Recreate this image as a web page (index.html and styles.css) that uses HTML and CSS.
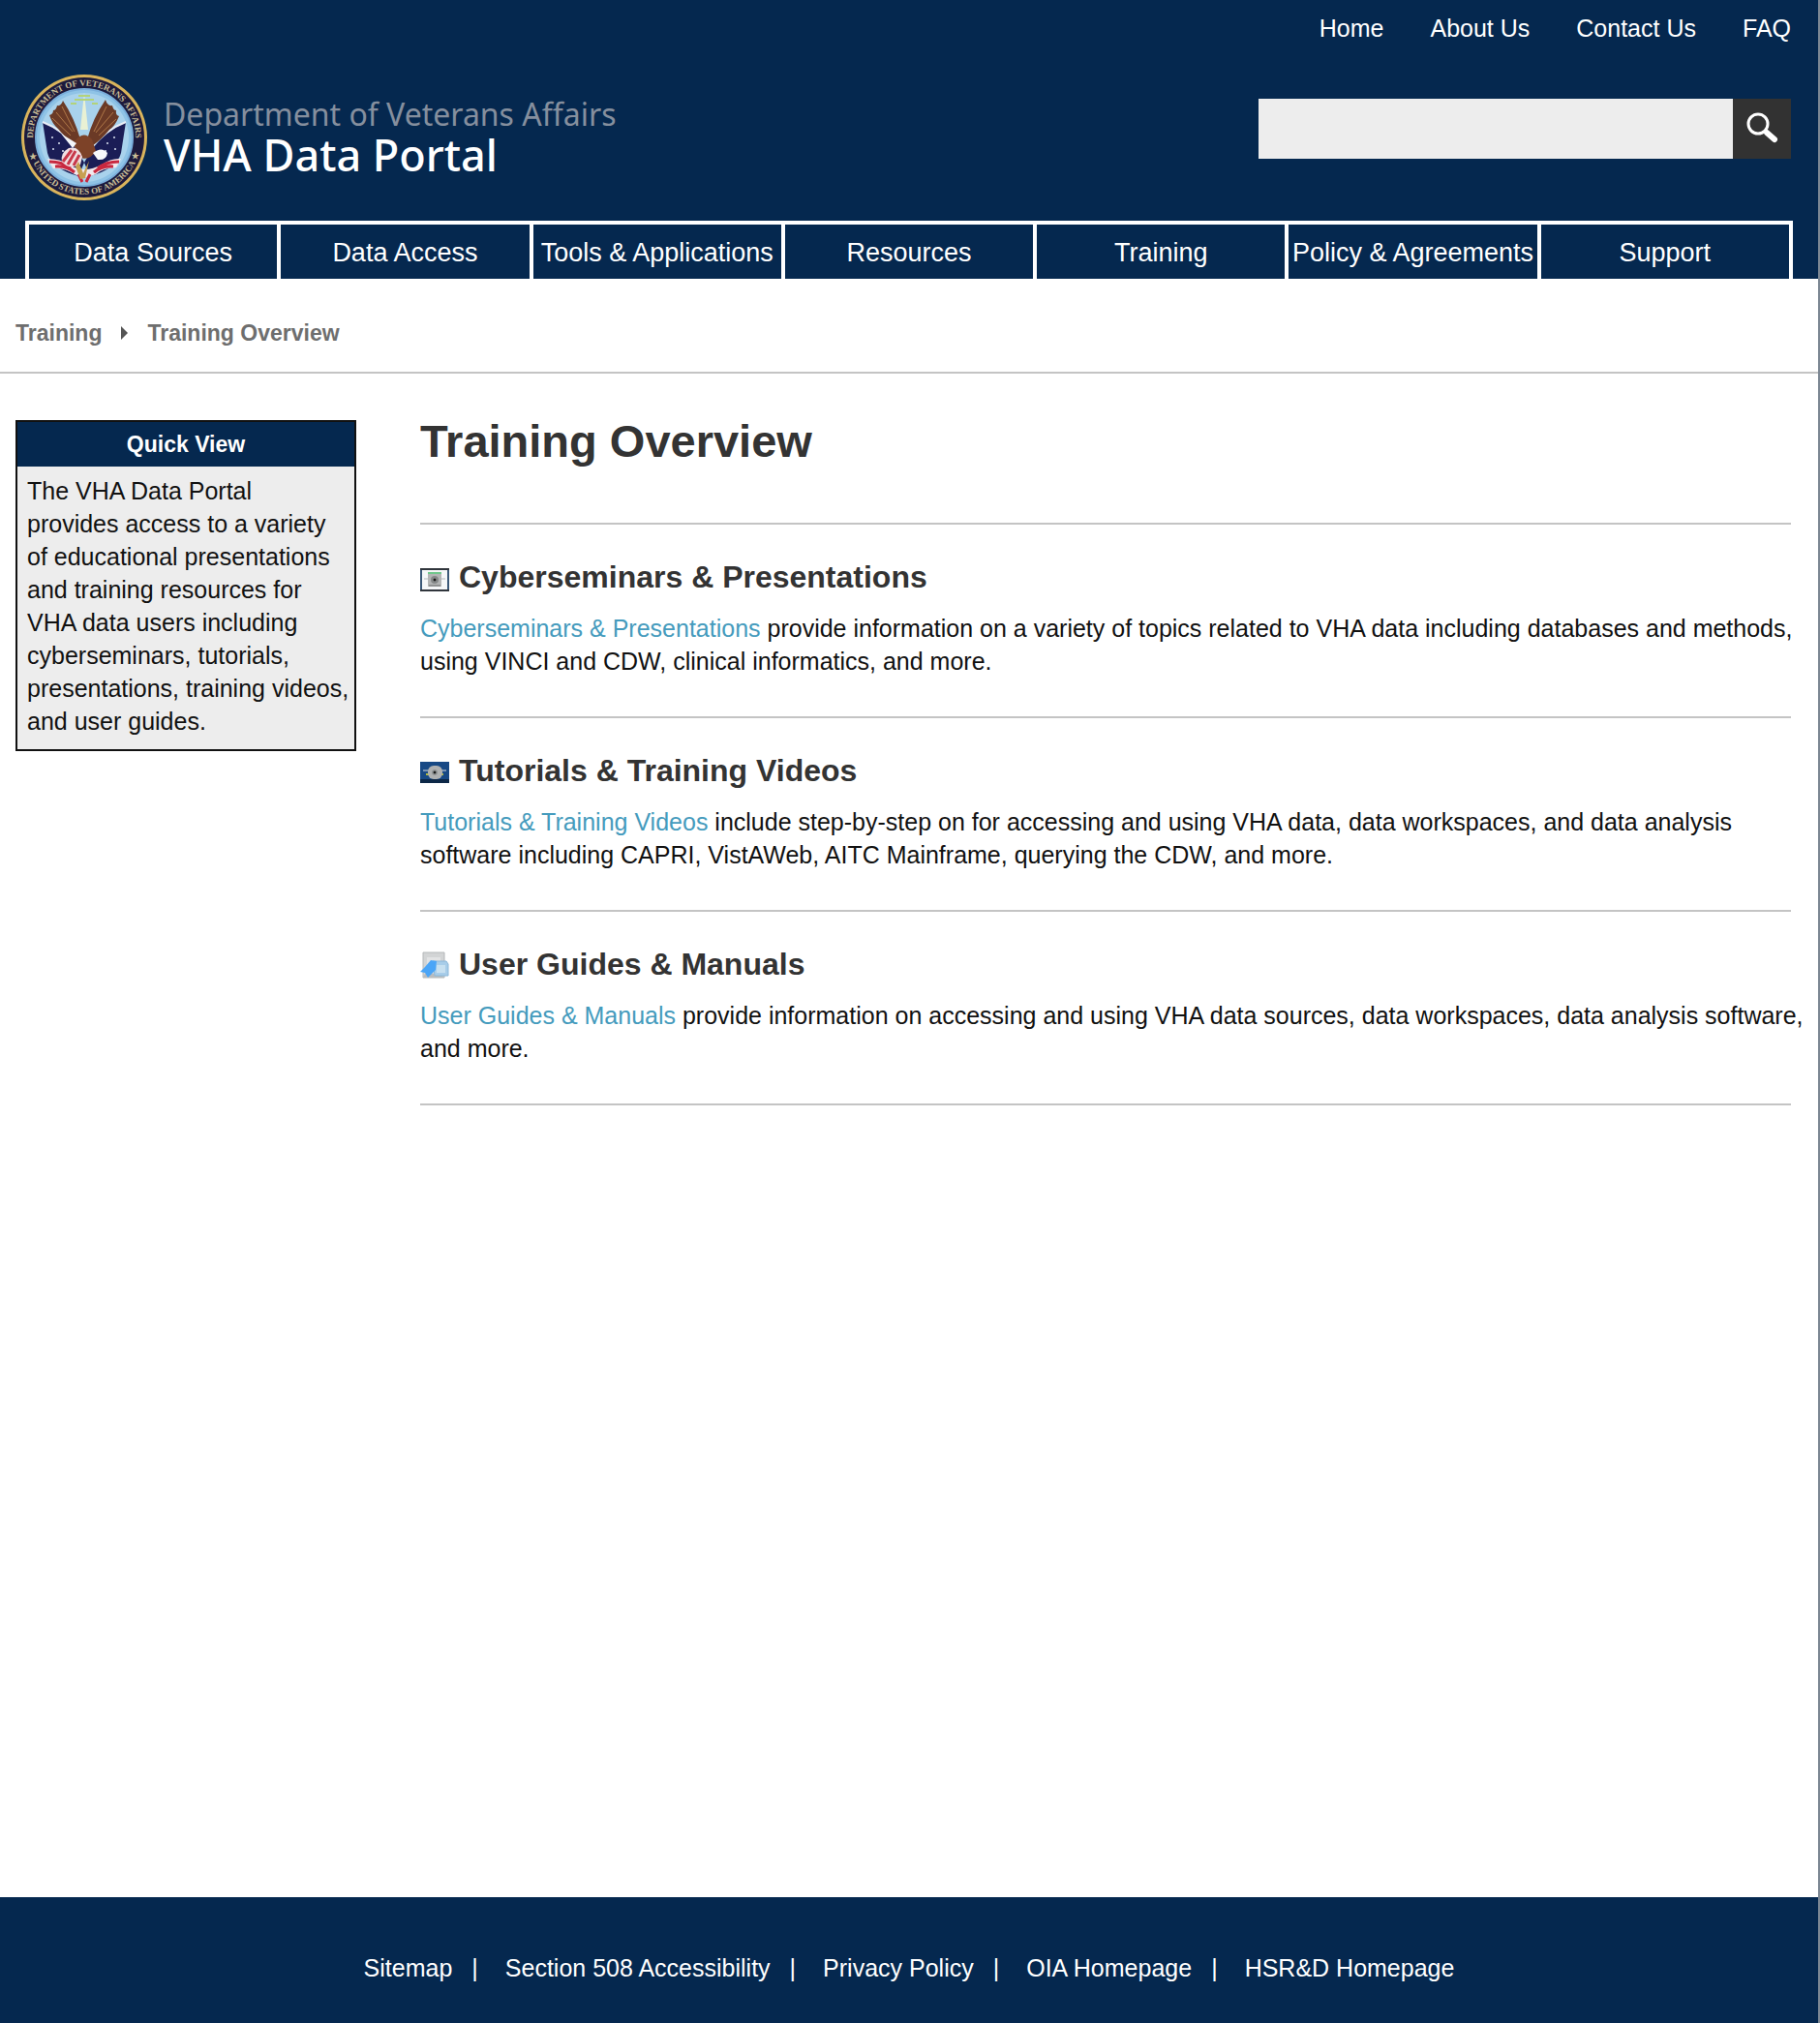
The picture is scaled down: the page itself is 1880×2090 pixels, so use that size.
FILE: index.html
```html
<!DOCTYPE html>
<html lang="en">
<head>
<meta charset="utf-8">
<title>Training Overview - VHA Data Portal</title>
<link rel="stylesheet" href="styles.css">
</head>
<body>
<header class="site-header">
  <nav class="utility-nav" aria-label="Utility">
    <a href="#">Home</a>
    <a href="#">About Us</a>
    <a href="#">Contact Us</a>
    <a href="#">FAQ</a>
  </nav>
  <div class="masthead">
    <a class="brand" href="#">
      <svg class="seal" viewBox="0 0 132 132" role="img" aria-label="Department of Veterans Affairs seal">
        <defs>
          <path id="arc-top" d="M18 88 A53 53 0 1 1 114 88"/>
          <path id="arc-bottom" d="M8 55 A59 59 0 1 0 124 55"/>
          <clipPath id="field"><circle cx="66" cy="66" r="50"/></clipPath>
        </defs>
        <circle cx="66" cy="66" r="65" fill="#d9b45c"/>
        <circle cx="66" cy="66" r="62" fill="#1d1a3c"/>
        <circle cx="66" cy="66" r="50" fill="#8fc3e6"/>
        <g clip-path="url(#field)">
          <circle cx="66" cy="66" r="46" fill="#a9d2ec"/>
          <path d="M66 20 L70 58 H62 Z" fill="#e9f1d4"/>
          <path d="M56 27h20M52 31h6M74 31h6M60 23h12" stroke="#b3d37a" stroke-width="2"/>
          <path d="M23 50 Q42 58 58 78 L66 92 L60 106 Q32 98 28 82 Z" fill="#1b1d56"/>
          <path d="M109 50 Q90 58 74 78 L66 92 L72 106 Q100 98 104 82 Z" fill="#1b1d56"/>
          <path d="M23 50 Q44 58 60 78M109 50 Q88 58 72 78" stroke="#e9eef6" stroke-width="2" fill="none"/>
          <g fill="#dfe6f4"><circle cx="33" cy="66" r="1"/><circle cx="40" cy="72" r="1"/><circle cx="34" cy="78" r="1"/><circle cx="44" cy="80" r="1"/><circle cx="97" cy="66" r="1"/><circle cx="90" cy="72" r="1"/><circle cx="98" cy="78" r="1"/><circle cx="88" cy="80" r="1"/></g>
          <path d="M28 88 Q42 88 50 94 Q66 104 84 94 Q94 87 104 88 L99 97 Q84 98 78 104 Q66 110 56 104 Q46 97 34 98 Z" fill="#f2e8ec"/>
          <path d="M30 91 Q44 91 52 98M36 96 Q48 95 56 102M102 91 Q88 91 80 98M96 96 Q84 95 76 102M60 104l4 8M72 104l-4 8" stroke="#c8283f" stroke-width="3" fill="none"/>
          <path d="M62 68 Q56 46 44 28 Q42 34 38 33 Q37 38 34 38 Q34 42 30 43 Q33 52 39 57 Q46 66 57 74 Z" fill="#6b3a26"/>
          <path d="M69 68 Q75 46 88 27 Q90 34 95 33 Q96 38 99 38 Q98 43 102 44 Q98 54 92 58 Q84 68 74 75 Z" fill="#6b3a26"/>
          <path d="M56 70 Q65 58 74 68 L78 80 Q72 90 62 87 Q55 80 56 70Z" fill="#7d4228"/>
          <path d="M43 34l13 26M37 40l17 20M33 46l19 18M89 34l-13 26M96 40l-18 21M99 47l-18 17" stroke="#b07848" stroke-width="1" fill="none"/>
          <path d="M42 62 L58 72 L54 77 Z" fill="#f4f6fa"/>
          <path d="M75 82 Q84 75 90 82 Q89 90 80 89 Z" fill="#f7f8fa"/>
          <path d="M50 77 Q60 74 64 86 L62 94 Q50 100 43 91 Q41 82 50 77Z" fill="#efdfe2"/>
          <path d="M44 91l9-12M49 94l8-14M55 95l6-11" stroke="#c8384a" stroke-width="3"/>
          <path d="M60 91l5 12 6-13-4 18-5 1-5-13Z" fill="#c7a051"/>
        </g>
        <circle cx="66" cy="66" r="50" fill="none" stroke="#7aaedb" stroke-width="2"/>
        <text class="seal-text"><textPath href="#arc-top" startOffset="50%" text-anchor="middle">DEPARTMENT OF VETERANS AFFAIRS</textPath></text>
        <text class="seal-text"><textPath href="#arc-bottom" startOffset="50%" text-anchor="middle">★ UNITED STATES OF AMERICA ★</textPath></text>
      </svg>
      <span class="brand-text">
        <span class="brand-dept">Department of Veterans Affairs</span>
        <span class="brand-name">VHA Data Portal</span>
      </span>
    </a>
    <form class="search" role="search">
      <input type="search" class="search-input" aria-label="Search">
      <button type="button" class="search-button" aria-label="Search">
        <svg width="34" height="34" viewBox="0 0 34 34" fill="none" stroke="#fff">
          <circle cx="13" cy="12" r="10" stroke-width="3"/>
          <path d="M22 21 L30 28" stroke-width="6" stroke-linecap="round"/>
        </svg>
      </button>
    </form>
  </div>
  <nav class="main-nav" aria-label="Main">
    <a href="#">Data Sources</a>
    <a href="#">Data Access</a>
    <a href="#">Tools &amp; Applications</a>
    <a href="#">Resources</a>
    <a href="#">Training</a>
    <a href="#">Policy &amp; Agreements</a>
    <a href="#">Support</a>
  </nav>
</header>

<nav class="breadcrumb" aria-label="Breadcrumb">
  <a href="#">Training</a>
  <svg width="7" height="14" viewBox="0 0 7 14"><path d="M0 0 L7 7 L0 14 Z" fill="#555"/></svg>
  <a href="#">Training Overview</a>
</nav>

<div class="page">
  <aside class="quick-view">
    <h2 class="quick-title">Quick View</h2>
    <p class="quick-text">The VHA Data Portal<br>provides access to a variety<br>of educational presentations<br>and training resources for<br>VHA data users including<br>cyberseminars, tutorials,<br>presentations, training videos,<br>and user guides.</p>
  </aside>
  <main class="content">
    <h1 class="title">Training Overview</h1>
    <section class="topic">
      <h2 class="topic-title">
        <svg class="topic-icon" width="30" height="30" viewBox="0 0 30 30">
          <rect y="4" width="30" height="24" fill="#3a5877"/>
          <path d="M0 4h30v2H0zM0 26h30v2H0z" fill="#30353c"/>
          <rect x="2" y="6" width="26" height="20" fill="#f5f7f8"/>
          <path d="M4 15h22" stroke="#d5d8da" stroke-width="2"/>
          <rect x="8" y="8" width="14" height="15" fill="#b3b5b5"/>
          <path d="M8 9h14" stroke="#71c78c" stroke-width="2"/>
          <path d="M9 22h12" stroke="#8f9191" stroke-width="2"/>
          <circle cx="15" cy="16" r="4" fill="#858888"/>
          <circle cx="15" cy="16" r="1" fill="#111" stroke="#111"/>
        </svg>
        Cyberseminars &amp; Presentations
      </h2>
      <p><a href="#">Cyberseminars &amp; Presentations</a> provide information on a variety of topics related to VHA data including databases and methods, using VINCI and CDW, clinical informatics, and more.</p>
    </section>
    <section class="topic">
      <h2 class="topic-title">
        <svg class="topic-icon" width="30" height="30" viewBox="0 0 30 30">
          <rect y="4" width="30" height="22" fill="#174985"/>
          <rect y="22" width="30" height="4" fill="#0c2747"/>
          <path d="M3 13h24" stroke="#7893b3" stroke-width="2"/>
          <path d="M6 17h18" stroke="#b5bd3c" stroke-width="2"/>
          <rect x="8" y="8" width="15" height="14" rx="6" fill="#afb1b2"/>
          <circle cx="15" cy="15" r="3" fill="#909394"/>
          <circle cx="15" cy="15" r="1" fill="#111" stroke="#111"/>
        </svg>
        Tutorials &amp; Training Videos
      </h2>
      <p><a href="#">Tutorials &amp; Training Videos</a> include step-by-step on for accessing and using VHA data, data workspaces, and data analysis software including CAPRI, VistAWeb, AITC Mainframe, querying the CDW, and more.</p>
    </section>
    <section class="topic">
      <h2 class="topic-title">
        <svg class="topic-icon" width="30" height="30" viewBox="0 0 30 30">
          <path d="M3 1h22v26H3z" fill="#d2d4d5" stroke="#b4b7b9"/>
          <path d="M7 6h14v16H7z" fill="#e2e3e4"/>
          <path d="M3 27h22l-4-4H5z" fill="#b9bcbe"/>
          <path d="M13 10h14l2 3v12H15z" fill="#a8cde9" stroke="#8ab7d9"/>
          <path d="M17 14h9v8h-9z" fill="#c7e0f0"/>
          <path d="M11 9l6 1-1 9-8 8-3-5-5-1 5-5z" fill="#4aa5f7"/>
        </svg>
        User Guides &amp; Manuals
      </h2>
      <p><a href="#">User Guides &amp; Manuals</a> provide information on accessing and using VHA data sources, data workspaces, data analysis software, and more.</p>
    </section>
  </main>
</div>

<footer class="site-footer">
  <a href="#">Sitemap</a>
  <a href="#">Section 508 Accessibility</a>
  <a href="#">Privacy Policy</a>
  <a href="#">OIA Homepage</a>
  <a href="#">HSR&amp;D Homepage</a>
</footer>
</body>
</html>
```
FILE: styles.css
```css
* {
  box-sizing: border-box;
}

body {
  display: flex;
  flex-direction: column;
  min-height: 100vh;
  margin: 0;
  border-right: 2px solid #7c8793;
  background: #fff;
  color: #111;
  font-family: "Liberation Sans", Arial, sans-serif;
  font-size: 25px;
  line-height: 34px;
}

a {
  color: inherit;
  text-decoration: none;
}

h1,
h2,
p {
  margin: 0;
}

.site-header {
  background: #05284f;
  color: #fff;
}

.utility-nav {
  display: flex;
  justify-content: flex-end;
  gap: 48px;
  padding: 12px 28px 0;
}

.masthead {
  display: flex;
  justify-content: space-between;
  align-items: flex-start;
  padding: 30px 28px 20px 21px;
}

.brand {
  display: flex;
  gap: 16px;
}

.seal {
  width: 132px;
  height: 132px;
}

.seal-text {
  fill: #c9bd96;
  font-family: "Liberation Serif", serif;
  font-size: 9px;
  font-weight: bold;
}

.brand-text {
  display: flex;
  flex-direction: column;
  padding-top: 22px;
  font-family: "Noto Sans", sans-serif;
}

.brand-dept {
  color: #858f9e;
  font-size: 32px;
  line-height: 40px;
}

.brand-name {
  font-size: 45px;
  line-height: 44px;
  font-weight: 500;
}

.search {
  display: flex;
  width: 550px;
  height: 62px;
  margin-top: 26px;
}

.search-input {
  flex: 1;
  min-width: 0;
  padding: 0 16px;
  border: 0;
  border-radius: 0;
  background: #ededed;
  font: inherit;
}

.search-button {
  display: flex;
  align-items: flex-start;
  justify-content: center;
  width: 60px;
  padding: 14px 0 0;
  border: 0;
  background: #323232;
}

.main-nav {
  display: grid;
  grid-template-columns: repeat(7, 1fr);
  gap: 4px;
  margin: 0 26px;
  padding: 4px 4px 0;
  background: #fff;
  font-size: 27px;
}

.main-nav a {
  padding-top: 2px;
  background: #05284f;
  line-height: 54px;
  text-align: center;
  white-space: nowrap;
}

.breadcrumb {
  display: flex;
  align-items: center;
  gap: 20px;
  padding: 39px 16px 23px;
  border-bottom: 2px solid #c4c4c4;
  color: #6e6e6e;
  font-size: 23px;
  font-weight: bold;
}

.page {
  display: flex;
  flex: 1;
  align-items: flex-start;
  gap: 66px;
  padding: 42px 28px 42px 16px;
}

.quick-view {
  width: 352px;
  flex: none;
  margin-top: 6px;
  border: 2px solid #111;
  background: #ededed;
}

.quick-title {
  background: #05284f;
  color: #fff;
  font-size: 23px;
  line-height: 46px;
  text-align: center;
}

.quick-text {
  padding: 8px 4px 12px 10px;
}

.content {
  flex: 1;
}

.title {
  padding-bottom: 56px;
  border-bottom: 2px solid #c4c4c4;
  color: #333;
  font-size: 47px;
  line-height: 56px;
}

.topic {
  padding: 34px 0 40px;
  border-bottom: 2px solid #c4c4c4;
}

.topic p {
  margin-right: -14px;
}

.topic-title {
  display: flex;
  align-items: center;
  gap: 10px;
  margin-bottom: 16px;
  color: #333;
  font-size: 32px;
  line-height: 40px;
}

.topic-icon {
  margin-top: 4px;
}

.topic p a {
  color: #459bbd;
}

.site-footer {
  display: flex;
  justify-content: center;
  padding: 56px 16px 40px;
  background: #05284f;
  color: #fff;
}

.site-footer a + a::before {
  content: "|";
  margin: 0 28px 0 20px;
}
```
